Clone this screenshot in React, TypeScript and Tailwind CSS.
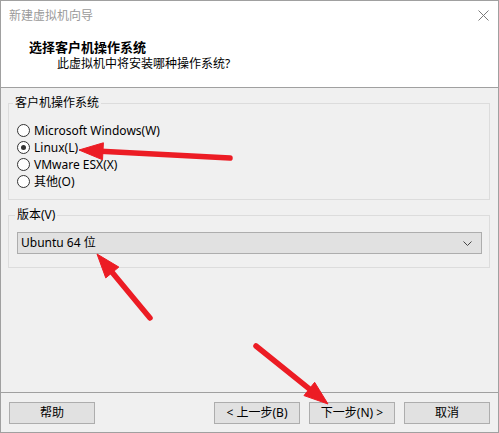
import type { ReactNode } from 'react';

type Pt = [number, number];

// red annotation arrow: shaft with round cap and a triangular head at `to`
function Arrow({ from, to }: { from: Pt; to: Pt }) {
  const dx = to[0] - from[0];
  const dy = to[1] - from[1];
  const len = Math.hypot(dx, dy);
  const ux = dx / len;
  const uy = dy / len;
  const headLen = 24;
  const half = 8.5;
  const bx = to[0] - ux * headLen;
  const by = to[1] - uy * headLen;
  const pts = [
    `${to[0]},${to[1]}`,
    `${bx - uy * half},${by + ux * half}`,
    `${bx + uy * half},${by - ux * half}`,
  ].join(' ');
  return (
    <g fill="#ec1c24" stroke="#ec1c24">
      <line x1={from[0]} y1={from[1]} x2={bx + ux * 2} y2={by + uy * 2} strokeWidth={5.5} strokeLinecap="round" />
      <polygon points={pts} strokeWidth={1} strokeLinejoin="round" />
    </g>
  );
}

function Radio({ label, checked }: { label: string; checked?: boolean }) {
  return (
    <div className="flex h-[17px] items-center">
      <span className="flex h-[13px] w-[13px] items-center justify-center rounded-full border border-[#333] bg-white">
        {checked && <span className="h-[5px] w-[5px] rounded-full bg-[#333]" />}
      </span>
      <span className="ml-[4px] text-[12px] leading-[17px] text-black">{label}</span>
    </div>
  );
}

function Button({ children, className = '' }: { children: ReactNode; className?: string }) {
  return (
    <button className={`h-[22px] w-[86px] border border-[#adadad] bg-[#e1e1e1] text-[12px] leading-[20px] text-black ${className}`}>
      {children}
    </button>
  );
}

export default function App() {
  return (
    <div
      className="relative flex h-[433px] w-[499px] flex-col border border-[#a0a0a0] bg-[#f0f0f0] text-black"
      style={{ fontFamily: '"Noto Sans", "Noto Sans CJK SC", sans-serif' }}
    >
      {/* header */}
      <div className="h-[87px] border-b border-[#a0a0a0] bg-white">
        <div className="flex h-[29px] items-center justify-between pl-[8px] pr-[9px]">
          <span className="text-[12px] leading-[16px] text-[#9a9a9a]">新建虚拟机向导</span>
          <svg width="11" height="11" viewBox="0 0 11 11">
            <path d="M0.5 0.5 L10.5 10.5 M10.5 0.5 L0.5 10.5" stroke="#7a7a7a" strokeWidth="1" />
          </svg>
        </div>
        <div className="mt-[9px] pl-[28px] text-[13px] font-bold leading-[16px]">选择客户机操作系统</div>
        <div className="mt-[1px] pl-[56px] text-[12px] leading-[16px]">此虚拟机中将安装哪种操作系统?</div>
      </div>

      {/* guest os */}
      <fieldset className="ml-[7px] mt-[8px] w-[482px] border border-[#dcdcdc] pb-[9px] pl-[8px]">
        <legend className="ml-[-4px] px-[2px] text-[12px] leading-[14px]">客户机操作系统</legend>
        <div className="mt-[12px] flex flex-col">
          <Radio label="Microsoft Windows(W)" />
          <Radio label="Linux(L)" checked />
          <Radio label="VMware ESX(X)" />
          <Radio label="其他(O)" />
        </div>
      </fieldset>

      {/* version */}
      <fieldset className="ml-[7px] mt-[8px] w-[482px] border border-[#dcdcdc] pb-[13px] pl-[8px]">
        <legend className="ml-[-2px] px-[2px] text-[12px] leading-[14px]">版本(V)</legend>
        <div className="mt-[10px] flex h-[22px] w-[465px] items-center justify-between border border-[#adadad] bg-[#e1e1e1] pl-[3px] pr-[9px]">
          <span className="text-[12px] leading-[16px]">Ubuntu 64 位</span>
          <svg width="9" height="5" viewBox="0 0 9 5">
            <path d="M0.5 0.5 L4.5 4.5 L8.5 0.5" fill="none" stroke="#444" strokeWidth="1" />
          </svg>
        </div>
      </fieldset>

      <div className="flex-1" />

      {/* footer */}
      <div className="flex h-[40px] items-start border-t border-[#a0a0a0] pt-[9px]">
        <Button className="ml-[8px]">帮助</Button>
        <div className="flex-1" />
        <div className="mr-[8px] flex gap-[9px]">
          <Button>&lt; 上一步(B)</Button>
          <Button>下一步(N) &gt;</Button>
          <Button>取消</Button>
        </div>
      </div>

      <svg className="pointer-events-none absolute left-[-1px] top-[-1px]" width="499" height="433">
        <Arrow from={[230, 158]} to={[79, 150]} />
        <Arrow from={[150, 318]} to={[97, 254]} />
        <Arrow from={[256, 346]} to={[328, 404]} />
      </svg>
    </div>
  );
}
